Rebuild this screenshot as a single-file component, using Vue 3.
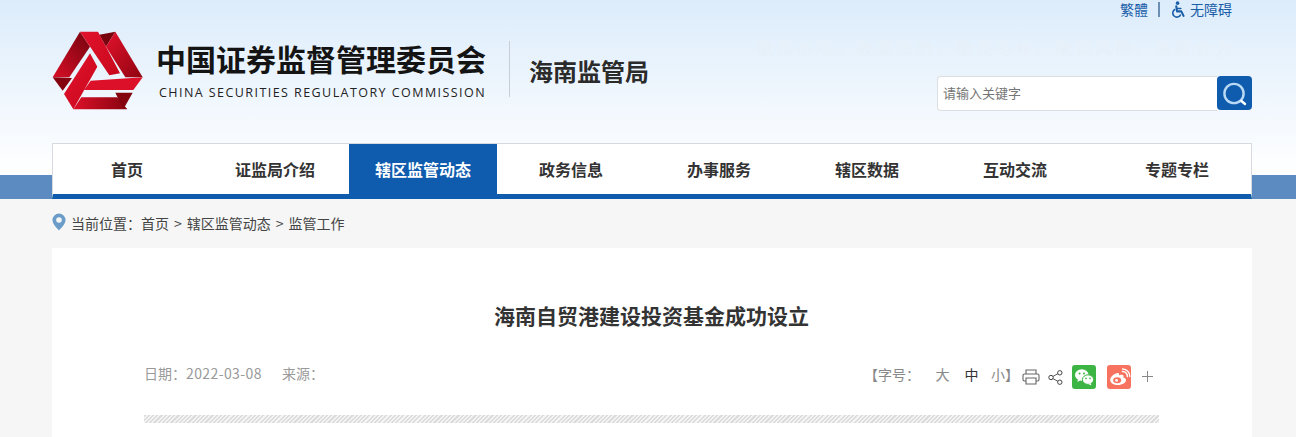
<script setup>
const navItems = ['首页', '证监局介绍', '辖区监管动态', '政务信息', '办事服务', '辖区数据', '互动交流', '专题专栏']
</script>

<template>
  <div class="page">
    <header class="header">
      <div class="head-row">
        <div class="brand">
          <svg class="logo" viewBox="36 30 276 240" width="92" height="80">
            <defs>
              <linearGradient id="gA" x1="0" y1="0" x2="1" y2="1"><stop offset="0" stop-color="#e2122c"/><stop offset="1" stop-color="#c8081c"/></linearGradient>
              <linearGradient id="gL" x1="1" y1="0" x2="0" y2="1"><stop offset="0" stop-color="#74030e"/><stop offset="1" stop-color="#d80f26"/></linearGradient>
              <linearGradient id="gR" x1="0" y1="0" x2="1" y2="1"><stop offset="0" stop-color="#e2122c"/><stop offset="1" stop-color="#900410"/></linearGradient>
              <linearGradient id="gB" x1="0" y1="0" x2="1" y2="0"><stop offset="0" stop-color="#dc1028"/><stop offset="1" stop-color="#88040f"/></linearGradient>
            </defs>
            <polygon points="120,35 150,80 88,172 38,172" fill="url(#gL)"/>
            <polygon points="38,172 96,174 68,212" fill="#84030f"/>
            <polygon points="178,44 226,35 198,80" fill="#76030e"/>
            <polygon points="226,35 308,172 256,172 198,80" fill="url(#gR)"/>
            <polygon points="120,35 174,35 240,160 208,166" fill="url(#gA)"/>
            <polygon points="150,100 172,140 100,268 72,222" fill="url(#gA)"/>
            <polygon points="100,268 124,232 232,232 262,268" fill="url(#gB)"/>
            <polygon points="226,218 278,218 250,268" fill="#84030f"/>
            <polygon points="152,182 308,172 280,210 132,210" fill="#dc1028"/>
          </svg>
          <div class="names">
            <div class="cn-name">中国证券监督管理委员会</div>
            <div class="en-name">CHINA SECURITIES REGULATORY COMMISSION</div>
          </div>
          <div class="sub-name">海南监管局</div>
        </div>
        <div class="side">
          <div class="top-links">
            <span>繁體</span>
            <i class="sep"></i>
            <svg class="wheel" viewBox="0 0 16 18" width="15" height="17">
              <circle cx="7" cy="2.2" r="1.9" fill="#1a5ea8"/>
              <path d="M5.6 5.5 L6.4 11 L11 11 L13.4 15.8" fill="none" stroke="#1a5ea8" stroke-width="2.2" stroke-linejoin="round" stroke-linecap="round"/>
              <path d="M6.2 8 L10.5 8" stroke="#1a5ea8" stroke-width="1.6" stroke-linecap="round"/>
              <path d="M4.4 8.8 A4.4 4.4 0 1 0 10.4 14.4" fill="none" stroke="#1a5ea8" stroke-width="1.7"/>
            </svg>
            <span>无障碍</span>
          </div>
          <div class="slogan">敬畏市场、敬畏法治、敬畏专业、敬畏风险、发挥合力</div>
          <div class="search">
            <div class="search-input">请输入关键字</div>
            <div class="search-btn">
              <svg viewBox="0 0 35 34" width="35" height="34">
                <circle cx="17" cy="17.5" r="9.6" fill="none" stroke="#b9d9f4" stroke-width="2.4"/>
                <path d="M24.4 25 L28 28" stroke="#fff" stroke-width="2.4" stroke-linecap="round"/>
              </svg>
            </div>
          </div>
        </div>
      </div>
      <nav class="nav">
        <a v-for="(item, i) in navItems" :key="item" class="nav-item" :class="{ active: i === 2, last: i === 7 }">{{ item }}</a>
      </nav>
    </header>

    <div class="crumb">
      <svg viewBox="0 0 14 18" width="14" height="18">
        <path d="M7 0.5 A6.5 6.5 0 0 1 13.5 7 C13.5 11 9.5 14.5 7 17.5 C4.5 14.5 0.5 11 0.5 7 A6.5 6.5 0 0 1 7 0.5 Z" fill="#6b9cc9"/>
        <circle cx="7" cy="7" r="2.8" fill="#f6f6f6"/>
      </svg>
      <span>当前位置：首页<span class="gt">&gt;</span>辖区监管动态<span class="gt">&gt;</span>监管工作</span>
    </div>

    <main class="card">
      <h1 class="title">海南自贸港建设投资基金成功设立</h1>
      <div class="meta">
        <div class="meta-left">
          <span class="date">日期：<span class="digits">2022-03-08</span></span>
          <span>来源：</span>
        </div>
        <div class="meta-right">
          <span class="size-label">【字号：</span>
          <span class="size">大</span>
          <span class="size cur">中</span>
          <span class="size small">小】</span>
          <svg class="print" viewBox="0 0 18 16" width="18" height="16">
            <path d="M4 5 V1 H14 V5 M4 12 H2.5 A1.5 1.5 0 0 1 1 10.5 V6.5 A1.5 1.5 0 0 1 2.5 5 H15.5 A1.5 1.5 0 0 1 17 6.5 V10.5 A1.5 1.5 0 0 1 15.5 12 H14 M4 9 H14 V15 H4 Z" fill="none" stroke="#666" stroke-width="1.1"/>
          </svg>
          <svg class="share" viewBox="0 0 15 15" width="15" height="15">
            <path d="M4 7 L11 3 M4 8 L11 12" stroke="#555" stroke-width="1"/>
            <circle cx="3" cy="7.5" r="2.2" fill="#fff" stroke="#444" stroke-width="1"/>
            <circle cx="11.8" cy="2.8" r="2.2" fill="#fff" stroke="#444" stroke-width="1"/>
            <circle cx="11.8" cy="12.2" r="2.2" fill="#fff" stroke="#444" stroke-width="1"/>
          </svg>
          <span class="badge wechat">
            <svg viewBox="0 0 24 24" width="24" height="24">
              <ellipse cx="9.8" cy="10" rx="6.8" ry="5.8" fill="#fff"/>
              <path d="M6 14 L5.4 17 L9 15 Z" fill="#fff"/>
              <ellipse cx="16" cy="14.6" rx="5.6" ry="4.8" fill="#fff" stroke="#3cb544" stroke-width="1"/>
              <path d="M18.6 18 L19.4 20.4 L16.4 19 Z" fill="#fff"/>
              <circle cx="7.6" cy="8.4" r="1" fill="#3cb544"/><circle cx="12" cy="8.4" r="1" fill="#3cb544"/>
              <circle cx="14" cy="13.4" r=".8" fill="#3cb544"/><circle cx="18" cy="13.4" r=".8" fill="#3cb544"/>
            </svg>
          </span>
          <span class="badge weibo">
            <svg viewBox="0 0 24 24" width="24" height="24">
              <path d="M10.5 8 C6.5 9 3.2 12 3.2 15 C3.2 18 6.8 20 11 20 C15.5 20 19 17.6 19 15 C19 13.2 17.3 12.8 16.4 12.4 C16.8 11 16.4 10 15 9.8 C13.8 9.6 12.2 10.2 12 10.4 C12.4 8.6 11.8 7.8 10.5 8 Z" fill="#fff"/>
              <ellipse cx="10.2" cy="15.2" rx="4" ry="3" fill="#f7725f"/>
              <circle cx="9.6" cy="15.4" r="1.4" fill="#fff"/>
              <path d="M15.5 6.6 A4.6 4.6 0 0 1 20.4 11.6" fill="none" stroke="#fff" stroke-width="1.5" stroke-linecap="round"/>
              <path d="M15.6 4 A7.4 7.4 0 0 1 22.8 11.6" fill="none" stroke="#fff" stroke-width="1.4" stroke-linecap="round"/>
            </svg>
          </span>
          <svg class="plus" viewBox="0 0 11 11" width="11" height="11">
            <path d="M5.5 0 V11 M0 5.5 H11" stroke="#888" stroke-width="1"/>
          </svg>
        </div>
      </div>
      <div class="stripe"></div>
    </main>
  </div>
</template>

<style>
html, body { margin: 0; background: #f6f6f6; overflow: hidden; }
</style>

<style scoped>
.page {
  width: 1296px;
  height: 437px;
  overflow: hidden;
  font-family: "Noto Sans CJK SC", "Open Sans", sans-serif;
  background: #f6f6f6;
}
.header {
  height: 199px;
  box-sizing: border-box;
  padding: 0 44px 0 52px;
  background: linear-gradient(#dcecfb 0, #ffffff 175px, #5b8bc0 175px, #5b8bc0 199px);
}
.head-row {
  display: flex;
  justify-content: space-between;
  height: 143px;
}
.brand {
  display: flex;
  align-items: flex-start;
  padding-top: 30px;
}
.logo { display: block; margin-right: 12px; }
.names { padding-right: 23px; width: 330px; }
.cn-name {
  font-size: 30px;
  font-weight: 700;
  line-height: 34px;
  margin-top: 11px;
  color: #141414;
  white-space: nowrap;
}
.en-name {
  font-family: "Open Sans", sans-serif;
  font-size: 12.5px;
  line-height: 16px;
  margin: 10px 0 0 3px;
  letter-spacing: 1.44px;
  color: #222;
  white-space: nowrap;
}
.sub-name {
  margin-top: 11px;
  height: 56px;
  line-height: 60px;
  padding-left: 19px;
  border-left: 1px solid #c8ced4;
  font-size: 24px;
  font-weight: 700;
  color: #2b2b2b;
  white-space: nowrap;
}
.side {
  display: flex;
  flex-direction: column;
  align-items: flex-end;
}
.top-links {
  display: flex;
  align-items: center;
  height: 18px;
  padding-right: 20px;
  font-size: 14px;
  line-height: 18px;
  color: #1a5ea8;
}
.sep { display: block; width: 2px; height: 15px; background: #6d8fb3; margin: 0 11px 0 10px; }
.wheel { display: block; margin-right: 4px; }
.slogan {
  margin-top: 19px;
  height: 20px;
  line-height: 20px;
  padding-right: 17px;
  font-size: 16px;
  letter-spacing: 3.92px;
  color: #e8f0f8;
  white-space: nowrap;
}
.search {
  display: flex;
  margin-top: 19px;
  height: 34px;
}
.search-input {
  box-sizing: border-box;
  width: 280px;
  height: 35px;
  padding-left: 5px;
  background: #fff;
  border: 1px solid #dcdfe2;
  border-right: 0;
  border-radius: 4px 0 0 4px;
  font-size: 13px;
  line-height: 32px;
  color: #757575;
}
.search-btn {
  width: 35px;
  height: 34px;
  background: #0f5bae;
  border-radius: 4px;
}
.search-btn svg { display: block; }
.nav {
  display: flex;
  box-sizing: border-box;
  height: 56px;
  padding: 0 1px;
  background: #fff;
  border: 1px solid #d6dade;
  border-bottom: 5px solid #0f5bae;
}
.nav-item {
  width: 148px;
  height: 50px;
  text-align: center;
  font-size: 16px;
  font-weight: 700;
  line-height: 51px;
  color: #333;
}
.nav-item:first-child { margin-left: -1px; }
.nav-item.active { background: #0f5bae; color: #fff; }
.nav-item.last { margin-left: auto; margin-right: -1px; }
.crumb {
  display: flex;
  align-items: center;
  height: 47px;
  padding: 0 0 2px 52px;
  font-size: 14px;
  color: #444;
}
.crumb svg { display: block; margin: -1px 5px 0 0; }
.gt { margin: 0 5px; }
.card {
  box-sizing: border-box;
  margin: 0 44px 0 52px;
  height: 189px;
  padding: 0 93px 0 92px;
  background: #fff;
}
.title {
  margin: 0;
  padding-top: 51px;
  text-align: center;
  font-size: 21px;
  font-weight: 700;
  line-height: 32px;
  color: #333;
}
.meta {
  display: flex;
  justify-content: space-between;
  align-items: center;
  height: 24px;
  margin-top: 34px;
  font-size: 14px;
  color: #999;
}
.meta-left {
  align-self: flex-start;
  line-height: 16px;
}
.digits { letter-spacing: .4px; }
.date { margin-right: 20px; }
.meta-right { display: flex; align-items: center; }
.size-label { margin-right: 8px; color: #888; line-height: 18px; margin-top: -6px; }
.size { width: 29px; text-align: center; color: #888; line-height: 18px; margin-top: -6px; }
.size.cur { color: #333; }
.size.small { width: auto; margin-left: 5px; white-space: nowrap; }
.print { display: block; margin-left: 3px; }
.share { display: block; margin-left: 8px; }
.badge {
  display: block;
  width: 24px;
  height: 24px;
  border-radius: 3px;
}
.badge svg { display: block; }
.wechat { background: #3cb544; margin-left: 9px; }
.weibo { background: #f7725f; margin-left: 11px; }
.plus { display: block; margin: -2px 6px 0 11px; }
.stripe {
  height: 8px;
  margin-top: 26px;
  background: repeating-linear-gradient(135deg, #dcdcdc 0, #dcdcdc 1.5px, #f4f4f4 1.5px, #f4f4f4 3px);
}
</style>
